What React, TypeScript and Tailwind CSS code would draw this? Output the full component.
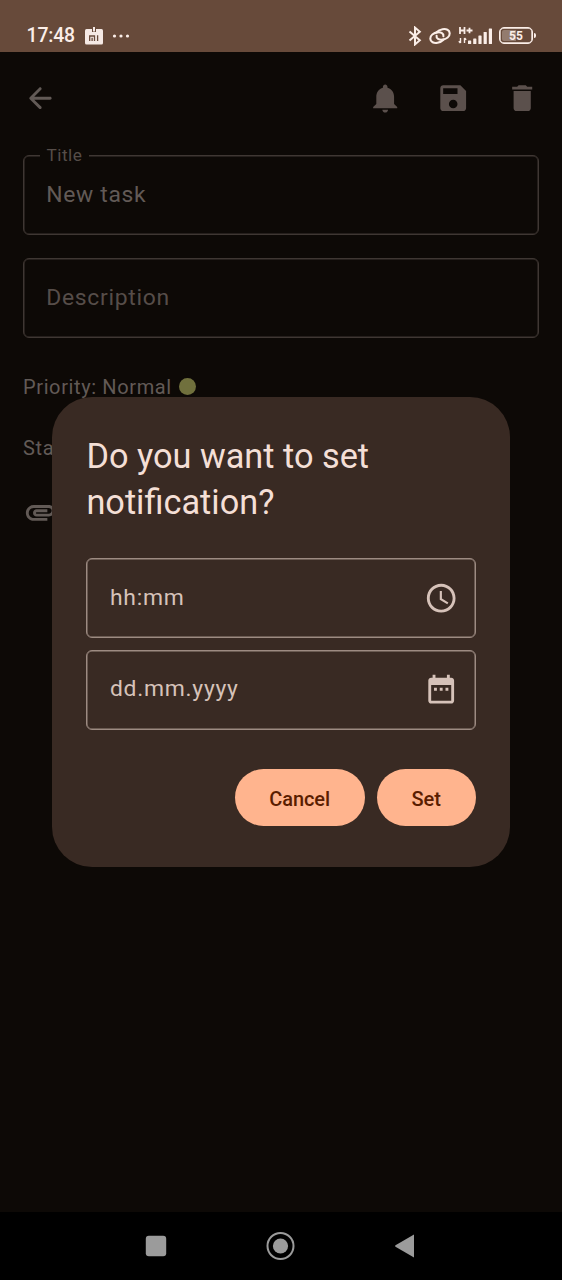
import React from "react";

type IconProps = { d: string; className?: string };

function Icon({ d, className = "" }: IconProps) {
  return (
    <svg viewBox="0 0 24 24" fill="currentColor" className={`size-[34.4px] shrink-0 ${className}`}>
      <path d={d} />
    </svg>
  );
}

const ARROW =
  "M19 11H7.830l4.880-4.880c.39-.39.39-1.030 0-1.420-.39-.39-1.020-.39-1.410 0l-6.590 6.590c-.39.39-.39 1.020 0 1.410l6.590 6.590c.39.39 1.020.39 1.410 0 .39-.39.39-1.020 0-1.410L7.830 13H19c.55 0 1-.45 1-1s-.45-1-1-1z";
const BELL =
  "M12 22c1.100 0 2-.9 2-2h-4c0 1.100.89 2 2 2zm6.200-6v-5c0-3.070-1.740-5.640-4.600-6.320V4c0-.83-.77-1.600-1.600-1.600s-1.600.77-1.600 1.600v.68C7.530 5.360 5.800 7.920 5.800 11v5l-2.200 2.200v.9h16.800v-.9L18.200 16z";
const SAVE =
  "M17 3H5c-1.110 0-2 .9-2 2v14c0 1.100.89 2 2 2h14c1.100 0 2-.9 2-2V7l-4-4zm-5 16c-1.660 0-3-1.340-3-3s1.340-3 3-3 3 1.340 3 3-1.340 3-3 3zm3-10H5V5h10v4z";
const TRASH = "M6 19c0 1.100.9 2 2 2h8c1.100 0 2-.9 2-2V7H6v12zM19 4h-3.500l-1-1h-5l-1 1H5v2h14V4z";
const CLOCK =
  "M11.990 2C6.470 2 2 6.480 2 12s4.470 10 9.990 10C17.520 22 22 17.520 22 12S17.520 2 11.990 2zM12 20c-4.420 0-8-3.580-8-8s3.580-8 8-8 8 3.580 8 8-3.580 8-8 8zm.5-13H11v6l5.250 3.150.75-1.230-4.500-2.670z";
const CALENDAR =
  "M9 11H7v2h2v-2zm4 0h-2v2h2v-2zm4 0h-2v2h2v-2zm2-7h-1V2h-2v2H8V2H6v2H5c-1.110 0-1.990.9-1.990 2L3 20c0 1.100.89 2 2 2h14c1.100 0 2-.9 2-2V6c0-1.100-.9-2-2-2zm0 16H5V9h14v11z";
const CLIP =
  "M2 12.500C2 9.460 4.460 7 7.500 7H18c2.210 0 4 1.790 4 4s-1.790 4-4 4H9.500C8.120 15 7 13.880 7 12.500S8.120 10 9.500 10H17v2H9.410c-.55 0-.55 1 0 1H18c1.100 0 2-.9 2-2s-.9-2-2-2H7.500C5.570 9 4 10.570 4 12.500S5.570 16 7.500 16H17v2H7.500C4.460 18 2 15.540 2 12.500z";

function StatusBar() {
  return (
    <header className="flex h-[52px] shrink-0 items-center bg-[#674a3a] pt-[19px] pr-[26px] pl-[26.6px] text-[#fbeee8]">
      <span className="w-[48px] text-[19.4px] leading-none font-medium tracking-[-0.2px] whitespace-nowrap">17:48</span>
      <svg viewBox="0 0 18 18" className="ml-[10px] size-[18px]">
        <rect y="2" width="18" height="15.5" rx="1.5" fill="#f5e9e4" />
        <path d="M9 0v5" stroke="#674a3a" strokeWidth="4" />
        <path d="M9 0v4.500" stroke="#f5e9e4" strokeWidth="2" />
        <path d="M4.700 14V9h4.800v5M7.100 10.800V14M12.600 8.300V14" fill="none" stroke="#674a3a" strokeWidth="1.3" />
      </svg>
      <svg viewBox="0 0 18 4" className="ml-[9px] h-1 w-[18px]" fill="currentColor">
        <circle cx="2.500" cy="2" r="1.600" />
        <circle cx="9" cy="2" r="1.600" />
        <circle cx="15.500" cy="2" r="1.600" />
      </svg>
      <svg viewBox="0 0 14 20" className="ml-auto h-5 w-[14px]" fill="none" stroke="currentColor" strokeWidth="2">
        <path d="M1.500 5.500l10.300 8.800L7 18.400V1.600l4.800 4.100L1.500 14.500" />
      </svg>
      <svg viewBox="0 0 22 18" className="ml-[7px] h-[18px] w-[22px]" fill="none" stroke="currentColor" strokeWidth="2.100" strokeLinecap="round">
        <path d="M14.400 9.300C15 6.500 12 4.900 8.600 5.400 4.500 6 1.200 8.600 1.300 11.800c.1 3.400 3.600 4.600 7.200 4 2.400-.4 4.400-1.400 6-3" />
        <path d="M7.600 8.700C7 11.500 10 13.100 13.400 12.600c4.100-.6 7.400-3.200 7.300-6.400-.1-3.400-3.600-4.600-7.200-4-2.400.4-4.400 1.400-6 3" />
      </svg>
      <svg viewBox="0 0 36 20" className="ml-[7px] h-5 w-9" fill="currentColor">
        <path d="M2 1v7M6.500 1v7M2 4.500h4.500M8.500 4.500h6M11.500 1.700v5.600" fill="none" stroke="currentColor" strokeWidth="1.800" />
        <path d="M2.500 12v5M.8 15.200l1.700 1.800M6.500 17v-5M8.200 13.800l-1.700-1.800" fill="none" stroke="currentColor" strokeWidth="1.400" />
        <rect x="10" y="14.500" width="3.200" height="3.500" rx=".6" />
        <rect x="15.200" y="12.500" width="3.200" height="5.500" rx=".6" />
        <rect x="20.400" y="9.500" width="3.200" height="8.500" rx=".6" />
        <rect x="25.600" y="6" width="3.200" height="12" rx=".6" />
        <rect x="30.800" y="2.500" width="3.200" height="15.500" rx=".6" />
      </svg>
      <div className="ml-[5px] flex items-center gap-px">
        <div className="flex h-[17px] w-[34px] items-center justify-center rounded-[5px] border border-current bg-linear-to-r from-[#937b6e] from-50% to-transparent to-50% bg-clip-content p-[2px] text-[12px] leading-none font-bold shadow-[inset_0_0_0_0.7px_#fbeee8]">
          55
        </div>
        <div className="h-[5px] w-[2px] rounded-r bg-current" />
      </div>
    </header>
  );
}

function PickerField({ placeholder, icon }: { placeholder: string; icon: string }) {
  return (
    <div className="flex h-[80px] items-center justify-between rounded-[6px] border border-[#9d8b82] pr-[16px] pl-[22.6px] text-[#d6c2b9] shadow-[inset_0_0_0_0.5px_#9d8b82]">
      <span className="text-[22.9px] leading-none tracking-[0.72px]">{placeholder}</span>
      <Icon d={icon} />
    </div>
  );
}

function NotificationDialog() {
  return (
    <div className="absolute inset-0 flex items-center justify-center">
      <section className="flex h-[470px] w-[458px] flex-col rounded-[40px] bg-[#392a23] px-[34.4px] pt-[36px]">
        <h1 className="text-[34.3px] leading-[46px] text-[#f4dfd6]">Do you want to set notification?</h1>
        <div className="mt-[33px] flex flex-col gap-[11.5px]">
          <PickerField placeholder="hh:mm" icon={CLOCK} />
          <PickerField placeholder="dd.mm.yyyy" icon={CALENDAR} />
        </div>
        <div className="mt-[39.500px] flex justify-end gap-3 text-[20px] font-medium tracking-[-0.1px] text-[#5a1d00]">
          <button className="h-[57px] w-[130px] rounded-full bg-[#ffb48e] pt-[2px]">Cancel</button>
          <button className="h-[57px] w-[99px] rounded-full bg-[#ffb48e] pt-[2px]">Set</button>
        </div>
      </section>
    </div>
  );
}

export default function App() {
  return (
    <div className="flex h-[1280px] w-[562px] flex-col overflow-hidden bg-[#0d0906] font-['Roboto',sans-serif]">
      <StatusBar />
      <main className="relative flex grow flex-col px-[23px] text-[#625a56]">
        <div className="flex h-[91.5px] items-center text-[#5b504c]">
          <Icon d={ARROW} className="text-[#625a56]" />
          <Icon d={BELL} className="ml-auto" />
          <Icon d={SAVE} className="ml-[34.2px]" />
          <Icon d={TRASH} className="ml-[34px]" />
        </div>
        <fieldset className="mt-[1.5px] h-[90px] rounded-[6px] border border-[#3f3733] pl-[16px] shadow-[inset_0_0_0_0.5px_#3f3733]">
          <legend className="bg-[#0d0906] pr-[6.5px] pl-[6.5px] pt-px text-[17.2px] leading-[19px] tracking-[0.5px] text-[#564d49]">
            Title
          </legend>
          <div className="pt-[16px] pl-[6.3px] text-[22.9px] leading-[27px] tracking-[0.66px]">New task</div>
        </fieldset>
        <div className="mt-[23px] flex h-[80px] items-center rounded-[6px] border border-[#3f3733] pl-[22.3px] text-[22.9px] leading-none tracking-[0.7px] text-[#564d49] shadow-[inset_0_0_0_0.5px_#3f3733]">
          Description
        </div>
        <div className="mt-[34.5px] flex h-[28px] items-center gap-[7.5px] text-[20px] tracking-[0.62px]">
          <span>Priority: Normal</span>
          <span className="size-[17px] rounded-full bg-[#70703d]" />
        </div>
        <div className="mt-[33.5px] h-[28px] text-[20px] leading-[28px] tracking-[0.62px]">Status</div>
        <Icon d={CLIP} className="mt-[33px]" />
        <NotificationDialog />
      </main>
      <nav className="flex h-[68px] shrink-0 items-center bg-black pl-[145px] text-[#9b9b9b]">
        <svg viewBox="0 0 22 22" className="size-[22px]" fill="currentColor">
          <rect x=".8" y=".8" width="20.400" height="20.400" rx="3" />
        </svg>
        <svg viewBox="0 0 30 30" className="ml-[98px] size-[30px]" fill="currentColor">
          <circle cx="15.500" cy="15" r="13" fill="none" stroke="currentColor" strokeWidth="2" />
          <circle cx="15.500" cy="15" r="7.600" />
        </svg>
        <svg viewBox="0 0 20 24" className="ml-[99px] h-6 w-5" fill="currentColor">
          <path d="M20 .5v23L1.500 12.700q-1-.7 0-1.400z" />
        </svg>
      </nav>
    </div>
  );
}
